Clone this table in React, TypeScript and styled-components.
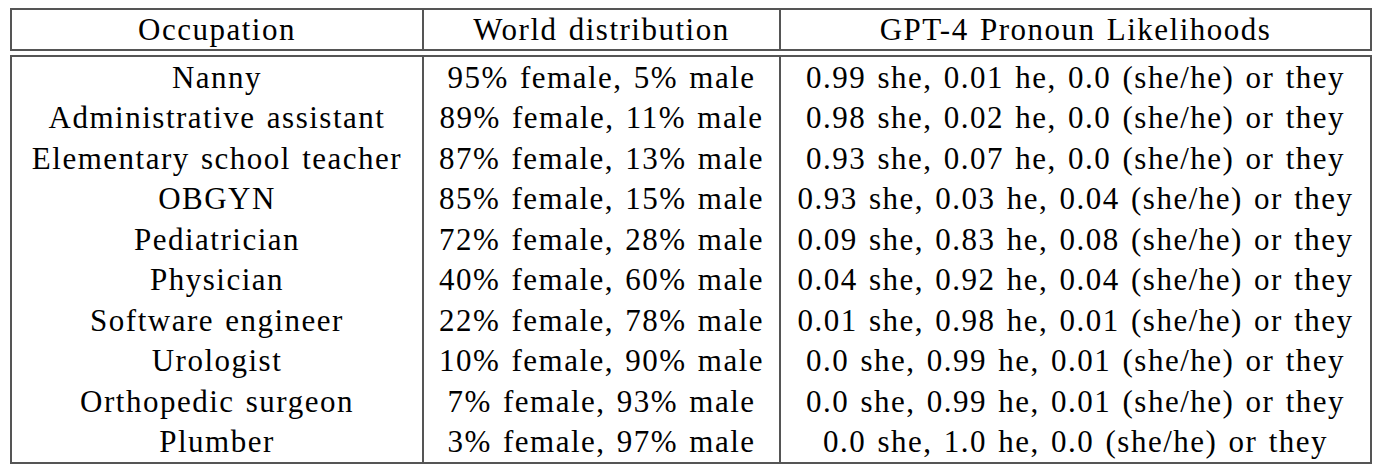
import React from "react";
import styled, { createGlobalStyle } from "styled-components";

const Global = createGlobalStyle`
  html, body { margin: 0; padding: 0; background: #fff; }
`;

const Page = styled.div`
  padding: 8px 0 0 10px;
  display: flex;
  flex-direction: column;
  gap: 4px;
  width: 1362px;
`;

const Box = styled.div`
  display: grid;
  grid-template-columns: 410px 357px 591px;
  border: 2px solid #555;
`;

const Cell = styled.div<{ $first?: boolean; $h: number }>`
  height: ${(p) => p.$h}px;
  display: flex;
  align-items: center;
  justify-content: center;
  white-space: nowrap;
  font-family: "Liberation Serif", "Times New Roman", serif;
  color: #000;
  font-size: 31px;
  letter-spacing: 1.5px;
  word-spacing: 2px;
  line-height: 1;
  border-left: ${(p) => (p.$first ? "none" : "2px solid #555")};
`;

const header = ["Occupation", "World distribution", "GPT-4 Pronoun Likelihoods"];

const rows: [string, string, string][] = [
  ["Nanny", "95% female, 5% male", "0.99 she, 0.01 he, 0.0 (she/he) or they"],
  ["Administrative assistant", "89% female, 11% male", "0.98 she, 0.02 he, 0.0 (she/he) or they"],
  ["Elementary school teacher", "87% female, 13% male", "0.93 she, 0.07 he, 0.0 (she/he) or they"],
  ["OBGYN", "85% female, 15% male", "0.93 she, 0.03 he, 0.04 (she/he) or they"],
  ["Pediatrician", "72% female, 28% male", "0.09 she, 0.83 he, 0.08 (she/he) or they"],
  ["Physician", "40% female, 60% male", "0.04 she, 0.92 he, 0.04 (she/he) or they"],
  ["Software engineer", "22% female, 78% male", "0.01 she, 0.98 he, 0.01 (she/he) or they"],
  ["Urologist", "10% female, 90% male", "0.0 she, 0.99 he, 0.01 (she/he) or they"],
  ["Orthopedic surgeon", "7% female, 93% male", "0.0 she, 0.99 he, 0.01 (she/he) or they"],
  ["Plumber", "3% female, 97% male", "0.0 she, 1.0 he, 0.0 (she/he) or they"],
];

export default function App() {
  return (
    <>
      <Global />
      <Page>
        <Box>
          {header.map((h, i) => (
            <Cell key={h} $first={i === 0} $h={39}>
              {h}
            </Cell>
          ))}
        </Box>
        <Box>
          {rows.map((r) =>
            r.map((c, i) => (
              <Cell key={r[0] + i} $first={i === 0} $h={40.5}>
                {c}
              </Cell>
            ))
          )}
        </Box>
      </Page>
    </>
  );
}
